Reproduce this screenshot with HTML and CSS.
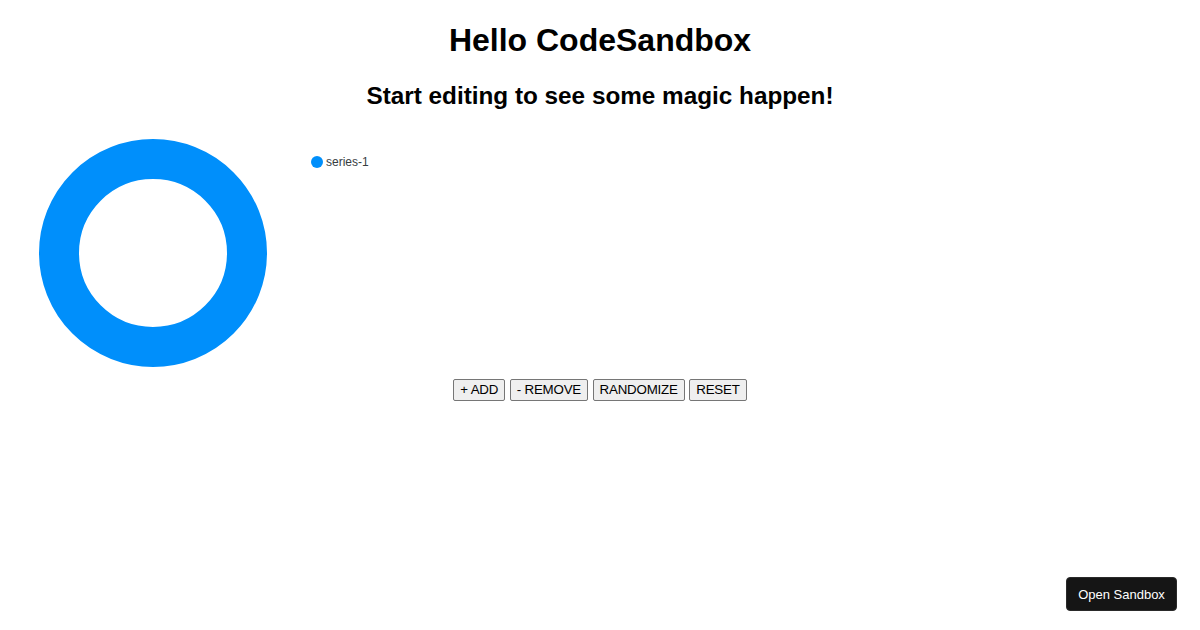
FILE: index.html
```html
<!DOCTYPE html>
<html>
<head>
<meta charset="utf-8">
<link rel="stylesheet" href="styles.css">
</head>
<body>
<div class="app">
  <h1>Hello CodeSandbox</h1>
  <h2>Start editing to see some magic happen!</h2>
  <div class="chart">
    <svg class="donut" width="300" height="245" viewBox="0 0 300 245">
      <circle cx="145" cy="126" r="94" fill="none" stroke="#008FFB" stroke-width="40"/>
    </svg>
    <div class="legend">
      <span class="marker"></span><span class="label">series-1</span>
    </div>
  </div>
  <div class="actions">
    <button>+ ADD</button>
    <button>- REMOVE</button>
    <button>RANDOMIZE</button>
    <button>RESET</button>
  </div>
</div>
<a class="open" href="#">Open Sandbox</a>
</body>
</html>
```
FILE: styles.css
```css
body {
  margin: 0;
  font-family: "Liberation Sans", Arial, sans-serif;
  background: #fff;
}
.app {
  text-align: center;
  padding: 1px 8px 0;
}
h1 {
  font-size: 32px;
  margin: 20.5px 0 23.5px;
}
h2 {
  font-size: 24.3px;
  margin: 0 0 17px;
}
.chart {
  display: flex;
  align-items: flex-start;
  text-align: left;
  height: 245px;
}
.donut {
  display: block;
  flex: none;
}
.legend {
  display: flex;
  align-items: center;
  margin-top: 28px;
  margin-left: 3px;
  font-family: "Liberation Sans", Helvetica, Arial, sans-serif;
  font-size: 12px;
  color: #373d3f;
}
.marker {
  width: 12px;
  height: 12px;
  border-radius: 50%;
  background: #008FFB;
  margin-right: 3px;
}
.actions {
  display: flex;
  justify-content: center;
  gap: 4.5px;
  margin-top: 7px;
}
.actions button {
  font-family: "Liberation Sans", Arial, sans-serif;
  font-size: 13.33px;
  letter-spacing: -0.2px;
  color: #000;
  background: #efefef;
  border: 1px solid #767676;
  border-radius: 2px;
  padding: 2px 6px;
  height: 22px;
  line-height: 16px;
}
.open {
  position: fixed;
  right: 23px;
  bottom: 19px;
  width: 111px;
  height: 34px;
  box-sizing: border-box;
  display: flex;
  align-items: center;
  justify-content: center;
  background: #151515;
  color: #fff;
  border-radius: 4px;
  font-size: 13px;
  text-decoration: none;
  border: 1px solid #2a2a2a;
}
```
